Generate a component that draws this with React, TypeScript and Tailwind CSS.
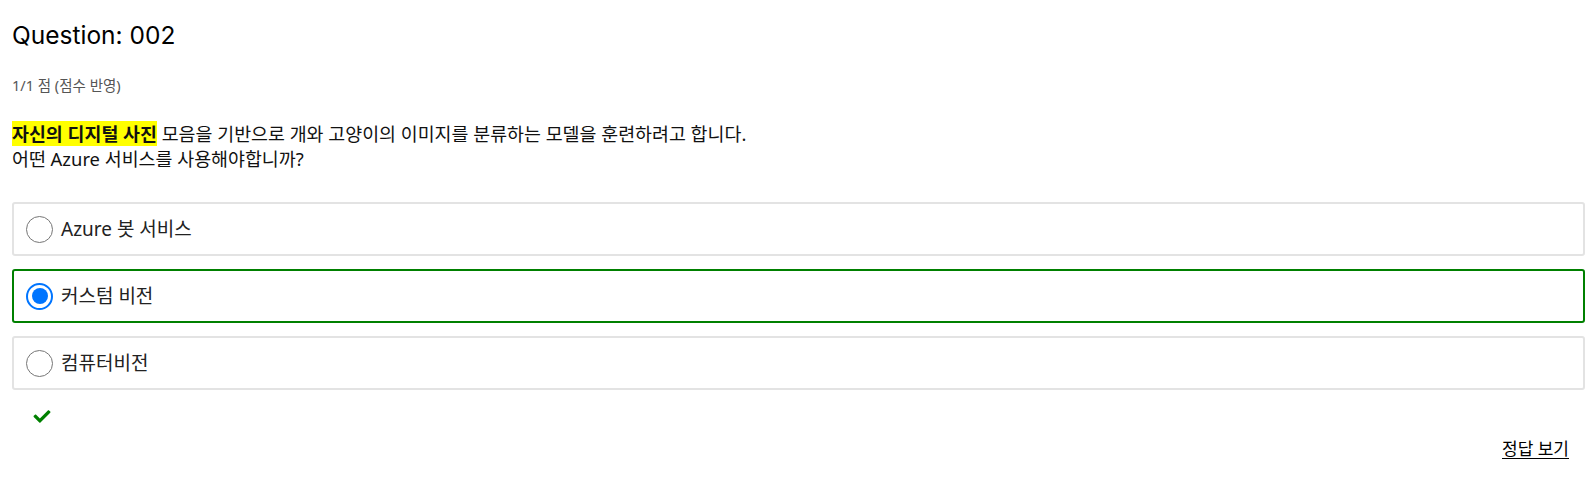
import { FaCheck } from 'react-icons/fa';

const options = [
  { id: 'a', label: 'Azure 봇 서비스' },
  { id: 'b', label: '커스텀 비전' },
  { id: 'c', label: '컴퓨터비전' },
];

const selected = 'b';

function Radio({ checked }: { checked: boolean }) {
  if (checked) {
    return (
      <span className="flex h-[27px] w-[27px] shrink-0 items-center justify-center rounded-full border-2 border-[#0075ff] bg-white">
        <span className="h-[16px] w-[16px] rounded-full bg-[#0075ff]" />
      </span>
    );
  }
  return <span className="h-[27px] w-[27px] shrink-0 rounded-full border-[1.5px] border-[#767676] bg-white" />;
}

export default function App() {
  return (
    <div
      className="min-h-[484px] bg-white px-3 pt-[19px] text-black"
      style={{ fontFamily: '"Noto Sans", "Noto Sans CJK KR", sans-serif' }}
    >
      <h1 className="text-[24.5px] leading-8 font-normal" style={{ fontFamily: 'Inter, "Noto Sans CJK KR", sans-serif' }}>
        Question: 002
      </h1>
      <p className="mt-[24px] text-[14.5px] leading-5 text-[#555]">1/1 점 (점수 반영)</p>

      <div className="mt-[26px] text-[18.4px] leading-[25px] text-[#111]">
        <p>
          <span className="bg-[#ffff00] font-bold">자신의 디지털 사진</span> 모음을 기반으로 개와 고양이의 이미지를 분류하는 모델을 훈련하려고 합니다.
        </p>
        <p>어떤 Azure 서비스를 사용해야합니까?</p>
      </div>

      <div className="mt-[31px] mr-[-1px] flex flex-col gap-[13px]">
        {options.map((o) => {
          const isSel = o.id === selected;
          return (
            <label
              key={o.id}
              className={
                'flex h-[54px] cursor-pointer items-center gap-[8px] rounded-[3px] border-2 px-[12px] ' +
                (isSel ? 'border-[#008000]' : 'border-[#e3e3e3]')
              }
            >
              <Radio checked={isSel} />
              <span className="text-[19px] text-[#222]">{o.label}</span>
            </label>
          );
        })}
      </div>

      <div className="mt-[18px] pl-[20px] text-[#008000]">
        <FaCheck className="h-[17px] w-[20px]" />
      </div>

      <div className="mt-[12px] flex justify-end pr-[15px]">
        <a href="#" className="text-[17px] leading-6 text-black underline underline-offset-[3px]">
          정답 보기
        </a>
      </div>
    </div>
  );
}
